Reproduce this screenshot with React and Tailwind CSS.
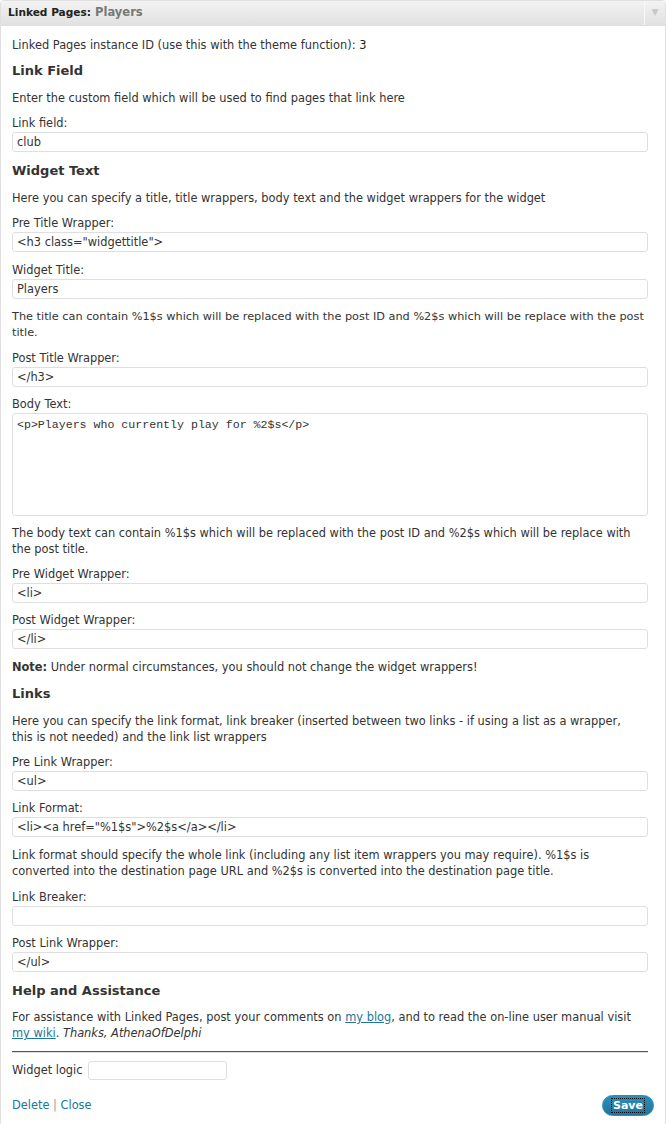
import React from 'react';

const FONT = { fontFamily: '"DejaVu Sans", Verdana, sans-serif' };
const MONO = { fontFamily: '"Liberation Mono", "DejaVu Sans Mono", monospace' };

// label + text input; gap above depends on what precedes it
function Field({ label, value, mt = 'mt-[10px]' }) {
  return (
    <div className={mt}>
      <div className="h-[16px] leading-[16px]">{label}</div>
      <div className="mt-[1px] h-[20px] border border-[#dfdfdf] rounded-[3px] bg-white px-[4px] leading-[18px] text-[#333] whitespace-pre overflow-hidden">
        {value}
      </div>
    </div>
  );
}

function Heading({ children, top }) {
  return (
    <h3 className={`${top ? 'mt-[10px]' : 'mt-[11px]'} text-[13px] font-bold leading-[16px] text-[#333]`}>
      {children}
    </h3>
  );
}

function P({ children, mt = 'mt-[10px]', className = '' }) {
  return <p className={`${mt} leading-[16px] ${className}`}>{children}</p>;
}

export default function App() {
  return (
    <div className="w-[666px] bg-white" style={FONT}>
      <div className="border border-[#dfdfdf] rounded-[4px] bg-white text-[11.4px] text-[#333] overflow-hidden">
        {/* title bar */}
        <div className="h-[25px] flex items-stretch border-b border-[#dfdfdf] bg-gradient-to-b from-[#f3f3f3] to-[#e1e1e1]">
          <div className="flex-1 flex items-center pl-[7px]">
            <span className="text-[10.6px] font-bold text-[#222]">Linked Pages:</span>
            <span className="ml-[4px] text-[11.5px] font-bold text-[#777]">Players</span>
          </div>
          <div className="w-[21px] border-l border-[#f8f8f8] flex items-center justify-center text-[#c8c8c8] text-[9px]">▼</div>
        </div>

        {/* content */}
        <div className="px-[11px] pt-[11px] pb-[9px]">
          <div className="pr-[6px]">
            <div className="leading-[16px]">
              Linked Pages instance ID (use this with the theme function): <span className="text-[#222]">3</span>
            </div>

            <Heading top>Link Field</Heading>
            <P mt="mt-[11px]">Enter the custom field which will be used to find pages that link here</P>
            <Field mt="mt-[9px]" label="Link field:" value="club" />

            <Heading>Widget Text</Heading>
            <P mt="mt-[11px]">Here you can specify a title, title wrappers, body text and the widget wrappers for the widget</P>
            <Field mt="mt-[9px]" label="Pre Title Wrapper:" value={'<h3 class="widgettitle">'} />
            <Field label="Widget Title:" value="Players" />
            <P className="text-[11.3px]">
              The title can contain %1$s which will be replaced with the post ID and %2$s which will be replace with the post title.
            </P>
            <Field mt="mt-[9px]" label="Post Title Wrapper:" value="</h3>" />
            <div className="mt-[9px]">
              <div className="h-[16px] leading-[16px]">Body Text:</div>
              <div
                className="mt-[1px] h-[103px] border border-[#dfdfdf] rounded-[3px] bg-white px-[4px] pt-[3px] text-[11.6px] leading-[16px] text-[#333]"
                style={MONO}
              >
                {'<p>Players who currently play for %2$s</p>'}
              </div>
            </div>
            <P mt="mt-[9px]">The body text can contain %1$s which will be replaced with the post ID and %2$s which will be replace with the post title.</P>
            <Field mt="mt-[9px]" label="Pre Widget Wrapper:" value="<li>" />
            <Field mt="mt-[9px]" label="Post Widget Wrapper:" value="</li>" />
            <P>
              <b className="font-bold">Note:</b> Under normal circumstances, you should not change the widget wrappers!
            </P>

            <Heading>Links</Heading>
            <P mt="mt-[11px]" className="max-w-[625px]">
              Here you can specify the link format, link breaker (inserted between two links - if using a list as a wrapper, this is not needed) and the link list wrappers
            </P>
            <Field mt="mt-[9px]" label="Pre Link Wrapper:" value="<ul>" />
            <Field mt="mt-[9px]" label="Link Format:" value={'<li><a href="%1$s">%2$s</a></li>'} />
            <P>Link format should specify the whole link (including any list item wrappers you may require). %1$s is converted into the destination page URL and %2$s is converted into the destination page title.</P>
            <Field label="Link Breaker:" value="" />
            <Field mt="mt-[9px]" label="Post Link Wrapper:" value="</ul>" />

            <Heading>Help and Assistance</Heading>
            <P>
              For assistance with Linked Pages, post your comments on{' '}
              <a className="text-[#21759b] underline" href="#">my blog</a>, and to read the on-line user manual visit{' '}
              <a className="text-[#21759b] underline" href="#">my wiki</a>. <i>Thanks, AthenaOfDelphi</i>
            </P>

            <div className="mt-[10px] border-t border-[#555] border-b border-b-[#ddd]" />

            <div className="mt-[8px] flex items-center gap-[5px]">
              <span>Widget logic</span>
              <div className="w-[139px] h-[19px] border border-[#dfdfdf] rounded-[3px] bg-white" />
            </div>
          </div>

          <div className="mt-[15px] flex items-center justify-between">
            <div className="text-[#21759b]">
              Delete <span className="text-[#999]">|</span> Close
            </div>
            <button className="h-[21px] px-[9px] rounded-full border border-[#298cba] bg-gradient-to-b from-[#2a8fbd] to-[#21759b] text-white text-[11px] font-bold leading-none">
              <span className="outline-1 outline-dotted outline-black px-[1px]">Save</span>
            </button>
          </div>
        </div>
      </div>
    </div>
  );
}
